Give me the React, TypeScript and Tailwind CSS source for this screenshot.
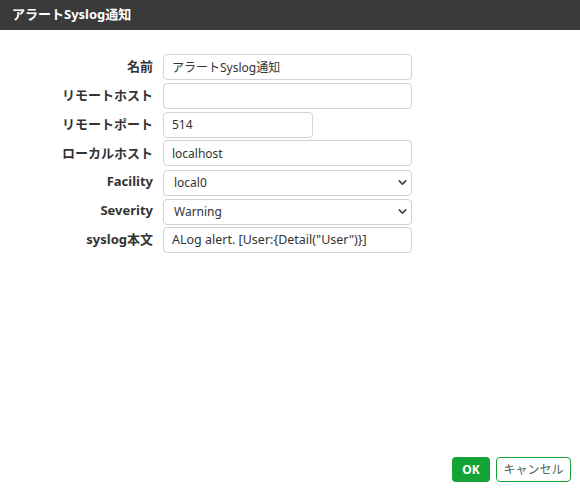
import { ChevronDown } from "lucide-react";

const font = { fontFamily: '"Noto Sans", "Noto Sans CJK JP", sans-serif' };

function Label({ children }: { children: React.ReactNode }) {
  return (
    <label className="flex h-[26px] items-center justify-end text-[13px] font-bold text-[#333]">
      {children}
    </label>
  );
}

function TextField({
  value,
  className = "w-[249px] text-[12px]",
}: {
  value: string;
  className?: string;
}) {
  return (
    <input
      defaultValue={value}
      className={`h-[26px] ${className} rounded-[4px] border border-[#cfd4da] bg-white px-2 text-[#333] outline-none`}
    />
  );
}

function SelectField({ value }: { value: string }) {
  return (
    <div className="relative h-[26px] w-[249px]">
      <select
        defaultValue={value}
        className="h-full w-full appearance-none rounded-[4px] border border-[#cfd4da] bg-white pl-[10px] text-[12px] text-[#333] outline-none"
      >
        <option>{value}</option>
      </select>
      <ChevronDown
        className="pointer-events-none absolute right-[3px] top-[7px] h-[13px] w-[13px] text-[#444]"
        strokeWidth={3}
      />
    </div>
  );
}

export default function App() {
  return (
    <div className="flex h-screen flex-col bg-white" style={font}>
      <div className="flex h-[30px] items-center bg-[#3a3a3a] px-3">
        <h1 className="text-[13px] font-bold text-white">アラートSyslog通知</h1>
      </div>

      <div className="flex-grow pt-[24px]">
        <div className="grid grid-cols-[153px_auto] gap-x-[10px] gap-y-[2.8px]">
          <Label>名前</Label>
          <TextField value="アラートSyslog通知" />
          <Label>リモートホスト</Label>
          <TextField value="" />
          <Label>リモートポート</Label>
          <TextField value="514" className="w-[150px] text-[12px]" />
          <Label>ローカルホスト</Label>
          <TextField value="localhost" />
          <Label>Facility</Label>
          <SelectField value="local0" />
          <Label>Severity</Label>
          <SelectField value="Warning" />
          <Label>syslog本文</Label>
          <TextField
            value={'ALog alert. [User:{Detail("User")}]'}
            className="w-[249px] text-[12.5px]"
          />
        </div>
      </div>

      <div className="flex justify-end gap-[6px] pb-[9px] pr-[9px]">
        <button className="h-[25px] w-[38px] rounded-[4px] bg-[#14a334] text-[12px] font-bold text-white">
          OK
        </button>
        <button className="h-[25px] w-[75px] rounded-[4px] border border-[#14a334] bg-white text-[12px] text-[#4a6a5a]">
          キャンセル
        </button>
      </div>
    </div>
  );
}
